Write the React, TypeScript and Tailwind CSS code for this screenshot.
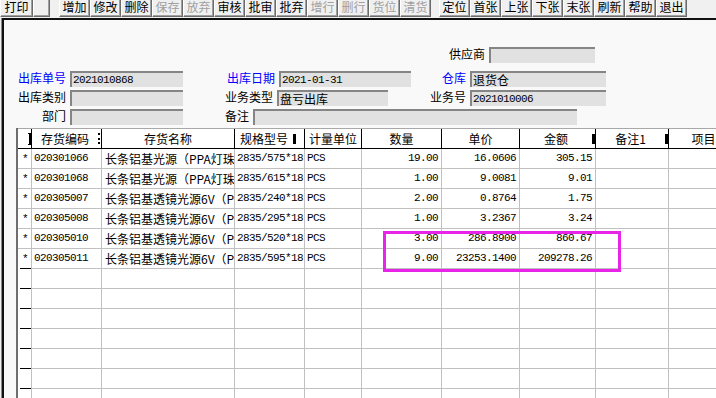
import * as React from 'react';

const CJK = "[font-family:'Noto_Sans_CJK_SC',sans-serif]";
const MONO = "[font-family:'Liberation_Mono','Noto_Sans_CJK_SC',monospace] text-[11px] tracking-[-0.6px]";

const tools1 = [
  { t: '增加' }, { t: '修改' }, { t: '删除' }, { t: '保存', off: true }, { t: '放弃', off: true },
  { t: '审核' }, { t: '批审' }, { t: '批弃' }, { t: '增行', off: true }, { t: '删行', off: true },
  { t: '货位', off: true }, { t: '清货', off: true },
];
const tools2 = ['定位', '首张', '上张', '下张', '末张', '刷新', '帮助', '退出'];

function ToolBtn({ label, off, w = 'w-[31px]' }: { label: string; off?: boolean; w?: string }) {
  return (
    <div
      className={`${w} h-[17px] shrink-0 flex justify-center bg-[#f0f0f0] border-l border-white border-r border-r-[#6b6b6b] border-b border-b-[#6b6b6b] shadow-[inset_-1px_-1px_0_#a0a0a0] text-[12px] leading-[14px] ${off ? 'text-[#a0a0a0]' : 'text-black'}`}
    >
      <span>{label}</span>
    </div>
  );
}

function Field({ value = '', w }: { value?: string; w: string }) {
  const ascii = /^[\x00-\x7f]*$/.test(value);
  return (
    <div
      className={`${w} h-[16px] shrink-0 bg-[#e1e1e1] border-t-2 border-l-2 border-[#858585] pl-[1px] flex items-center overflow-hidden whitespace-nowrap text-black ${ascii ? MONO : 'text-[12px] ' + CJK}`}
    >
      {value}
    </div>
  );
}

function Label({ text, w, blue }: { text: string; w: string; blue?: boolean }) {
  return (
    <div className={`${w} shrink-0 pr-[4px] text-right text-[12px] leading-[14px] -mt-[2px] ${blue ? 'text-[#0000ff]' : 'text-black'}`}>
      {text}
    </div>
  );
}

const cols = ['w-[14px]', 'w-[70px]', 'w-[133px]', 'w-[70px]', 'w-[57px]', 'w-[80px]', 'w-[78px]', 'w-[76px]', 'w-[73px]', 'w-[70px]'];
const heads = ['', '存货编码', '存货名称', '规格型号', '计量单位', '数量', '单价', '金额', '备注1', '项目'];

const rows = [
  ['020301066', '长条铝基光源（PPA灯珠）', '2835/575*18', 'PCS', '19.00', '16.0606', '305.15'],
  ['020301068', '长条铝基光源（PPA灯珠）', '2835/615*18', 'PCS', '1.00', '9.0081', '9.01'],
  ['020305007', '长条铝基透镜光源6V（PPA灯珠）', '2835/240*18', 'PCS', '2.00', '0.8764', '1.75'],
  ['020305008', '长条铝基透镜光源6V（PPA灯珠）', '2835/295*18', 'PCS', '1.00', '3.2367', '3.24'],
  ['020305010', '长条铝基透镜光源6V（PPA灯珠）', '2835/520*18', 'PCS', '3.00', '286.8900', '860.67'],
  ['020305011', '长条铝基透镜光源6V（PPA灯珠）', '2835/595*18', 'PCS', '9.00', '23253.1400', '209278.26'],
];

function HeadMark({ i }: { i: number }) {
  if (i === 0) return <span className="w-[3px] h-[12px] border-t border-r-2 border-b border-black" />;
  if (i === 1) return <span className="w-[2px] h-[11px] mr-[1px] border-r-2 border-dotted border-black" />;
  if (i === 3) return <span className="w-[3px] h-[10px] mr-[8px] bg-black" />;
  if (i === 7 || i === 8) return <span className="w-[3px] h-[10px] bg-black" />;
  return null;
}

export default function App() {
  const empty = 7;
  return (
    <div className={`relative w-[716px] h-[398px] overflow-hidden bg-[#f0f0f0] text-black ${CJK} flex flex-col`}>
      {/* toolbar */}
      <div className="h-[18px] flex shrink-0">
        <ToolBtn label="打印" w="w-[33px]" />
        <ToolBtn label="" w="w-[17px]" />
        <div className="w-[9px] shrink-0" />
        {tools1.map((b) => (
          <ToolBtn key={b.t} label={b.t} off={b.off} />
        ))}
        <div className="w-[8px] shrink-0" />
        {tools2.map((t) => (
          <ToolBtn key={t} label={t} />
        ))}
      </div>

      <div className="flex-1 ml-[1px] border-l border-[#8a8a8a] flex flex-col min-h-0">
        <div className="flex-1 border-l-2 border-t-2 border-[#111] bg-[#f9f9f9] flex flex-col min-h-0">
          {/* header form */}
          <div className="flex flex-col mt-[27px]">
            <div className="flex items-center h-[16px]">
              <Label text="供应商" w="w-[485px]" />
              <Field w="w-[106px]" />
            </div>
            <div className="flex items-center h-[16px] mt-[8px]">
              <Label text="出库单号" w="w-[66px]" blue />
              <Field value="2021010868" w="w-[113px]" />
              <Label text="出库日期" w="w-[96px]" blue />
              <Field value="2021-01-31" w="w-[132px]" />
              <Label text="仓库" w="w-[59px]" blue />
              <Field value="退货仓" w="w-[136px]" />
            </div>
            <div className="flex items-center h-[16px] mt-[3px]">
              <Label text="出库类别" w="w-[66px]" />
              <Field w="w-[113px]" />
              <Label text="业务类型" w="w-[94px]" />
              <Field value="盘亏出库" w="w-[111px]" />
              <Label text="业务号" w="w-[82px]" />
              <Field value="2021010006" w="w-[136px]" />
            </div>
            <div className="flex items-center h-[16px] mt-[3px]">
              <Label text="部门" w="w-[66px]" />
              <Field w="w-[113px]" />
              <Label text="备注" w="w-[70px]" />
              <Field w="w-[324px]" />
            </div>
          </div>

          {/* grid */}
          <div className="flex-1 mt-[3px] ml-[12px] border-l-2 border-[#6e6e6e] bg-white overflow-hidden">
            <div className="flex h-[21px] border-t border-[#a8a8a8] border-b border-b-black">
              {heads.map((h, i) => (
                <div key={i} className={`${cols[i]} shrink-0 flex items-center border-r border-black`}>
                  <span className="flex-1 text-center text-[12px] leading-[14px] whitespace-nowrap overflow-hidden">{h}</span>
                  <HeadMark i={i} />
                </div>
              ))}
            </div>
            {[...rows, ...Array.from({ length: empty }, () => null)].map((r, ri) => {
              const dash = ri >= rows.length - 1;
              return (
                <div key={ri} className="flex h-[20px]">
                  <div className={`${cols[0]} shrink-0 flex flex-col border-r border-[#c0c0c0]`}>
                    <div className="flex-1 flex items-center pl-[4px] text-[11px] leading-[12px] [font-family:'Liberation_Mono',monospace]">
                      {r ? '*' : ''}
                    </div>
                    <div className={dash ? 'h-[1px] ml-[2px] bg-black' : 'h-[1px] bg-[#c0c0c0]'} />
                  </div>
                  {cols.slice(1).map((c, ci) => {
                    const v = r ? r[ci] ?? '' : '';
                    const right = ci >= 4 && ci <= 6;
                    const font = ci === 1 ? 'text-[12px] pl-[3px]' : `${MONO} pl-[2px]`;
                    return (
                      <div
                        key={ci}
                        className={`${c} shrink-0 border-r border-b border-[#c0c0c0] flex items-center overflow-hidden whitespace-nowrap ${font} ${right ? 'justify-end pr-[3px]' : ''}`}
                      >
                        {v}
                      </div>
                    );
                  })}
                </div>
              );
            })}
          </div>
        </div>
      </div>

      {/* highlight annotation */}
      <div className="absolute left-[383px] top-[231px] w-[238px] h-[41px] border-[3px] border-[#e824e8] pointer-events-none" />
    </div>
  );
}
